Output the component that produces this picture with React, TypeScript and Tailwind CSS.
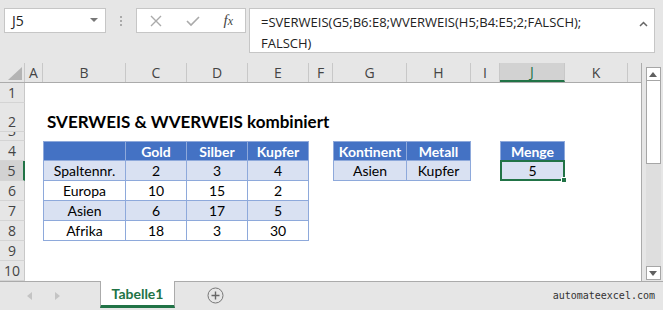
import React from "react";
import clsx from "clsx";

type Col = { key: string; w: string };
type Row = { n: number; h: string };
type CellDef = { text: string; kind: "head" | "light" | "white" | "title" };

const cols: Col[] = [
  { key: "A", w: "w-[18px]" },
  { key: "B", w: "w-[83px]" },
  { key: "C", w: "w-[61px]" },
  { key: "D", w: "w-[61px]" },
  { key: "E", w: "w-[61px]" },
  { key: "F", w: "w-[24px]" },
  { key: "G", w: "w-[74px]" },
  { key: "H", w: "w-[64px]" },
  { key: "I", w: "w-[29px]" },
  { key: "J", w: "w-[65px]" },
  { key: "K", w: "w-[63px]" },
];

const rows: Row[] = [
  { n: 1, h: "h-[20px]" },
  { n: 2, h: "h-[29px]" },
  { n: 3, h: "h-[9px]" },
  { n: 4, h: "h-[20px]" },
  { n: 5, h: "h-[20px]" },
  { n: 6, h: "h-[20px]" },
  { n: 7, h: "h-[20px]" },
  { n: 8, h: "h-[20px]" },
  { n: 9, h: "h-[20px]" },
  { n: 10, h: "h-[20px]" },
];

const cells: Record<string, CellDef> = {
  B2: { text: "SVERWEIS & WVERWEIS kombiniert", kind: "title" },
  B4: { text: "", kind: "head" },
  C4: { text: "Gold", kind: "head" },
  D4: { text: "Silber", kind: "head" },
  E4: { text: "Kupfer", kind: "head" },
  G4: { text: "Kontinent", kind: "head" },
  H4: { text: "Metall", kind: "head" },
  J4: { text: "Menge", kind: "head" },
  B5: { text: "Spaltennr.", kind: "light" },
  C5: { text: "2", kind: "light" },
  D5: { text: "3", kind: "light" },
  E5: { text: "4", kind: "light" },
  G5: { text: "Asien", kind: "light" },
  H5: { text: "Kupfer", kind: "light" },
  J5: { text: "5", kind: "light" },
  B6: { text: "Europa", kind: "white" },
  C6: { text: "10", kind: "white" },
  D6: { text: "15", kind: "white" },
  E6: { text: "2", kind: "white" },
  B7: { text: "Asien", kind: "light" },
  C7: { text: "6", kind: "light" },
  D7: { text: "17", kind: "light" },
  E7: { text: "5", kind: "light" },
  B8: { text: "Afrika", kind: "white" },
  C8: { text: "18", kind: "white" },
  D8: { text: "3", kind: "white" },
  E8: { text: "30", kind: "white" },
};

const leftEdge = ["B", "G", "J"];

function Cell({ col, row }: { col: Col; row: Row }) {
  const id = col.key + row.n;
  const c = cells[id];
  if (!c) return <div className={clsx(col.w, "shrink-0")} />;
  if (c.kind === "title") {
    return (
      <div className={clsx(col.w, "shrink-0 flex items-end pl-[4px] pb-[2px] overflow-visible")}>
        <span className="whitespace-nowrap text-[17px] font-bold text-black leading-none">{c.text}</span>
      </div>
    );
  }
  return (
    <div
      className={clsx(
        col.w,
        "shrink-0 relative flex items-center justify-center text-[14px] border-r border-b border-[#8ea9db]",
        leftEdge.includes(col.key) && "border-l",
        row.n === 4 && "border-t",
        c.kind === "head" && "bg-[#4472c4] text-white font-bold",
        c.kind === "light" && "bg-[#d9e1f2] text-black",
        c.kind === "white" && "bg-white text-black"
      )}
    >
      {c.text}
      {id === "J5" && (
        <>
          <div className="absolute -inset-[1px] border-2 border-[#217346]" />
          <div className="absolute -right-[3px] -bottom-[3px] w-[6px] h-[6px] bg-[#217346] border border-white" />
        </>
      )}
    </div>
  );
}

function FormulaBar() {
  return (
    <div className="h-[63px] flex items-start pt-[8px] pl-[4px] pr-[8px] bg-[#e6e6e6]">
      <div className="w-[102px] h-[25px] bg-white border border-[#c6c6c6] flex items-center justify-between pl-[7px] pr-[7px] text-[14px] text-[#222] font-['Open_Sans',sans-serif]">
        <span>J5</span>
        <svg width="8" height="5" viewBox="0 0 8 5">
          <polygon points="0,0 8,0 4,4" fill="#777" />
        </svg>
      </div>
      <div className="w-[30px] h-[25px] flex flex-col items-center justify-center gap-[2px]">
        <div className="w-[2px] h-[2px] bg-[#aaa]" />
        <div className="w-[2px] h-[2px] bg-[#aaa]" />
        <div className="w-[2px] h-[2px] bg-[#aaa]" />
      </div>
      <div className="w-[110px] h-[25px] bg-white border border-[#c6c6c6] flex items-center justify-between pl-[13px] pr-[12px]">
        <svg width="12" height="12" viewBox="0 0 12 12">
          <path d="M1 1 L11 11 M11 1 L1 11" stroke="#aaa" strokeWidth="1.4" />
        </svg>
        <svg width="14" height="12" viewBox="0 0 14 12">
          <path d="M1 6 L5 10 L13 2" stroke="#aaa" strokeWidth="1.6" fill="none" />
        </svg>
        <span className="text-[15px] italic text-[#444] font-['Liberation_Serif',serif] leading-none">
          f<span className="text-[12px]">x</span>
        </span>
      </div>
      <div className="ml-[3px] flex-1 h-[45px] bg-white border border-[#c6c6c6] flex justify-between pl-[11px] pr-[6px] pt-[3px] text-[13px] leading-[21px] text-[#222] font-['Open_Sans',sans-serif]">
        <div>
          <div>=SVERWEIS(G5;B6:E8;WVERWEIS(H5;B4:E5;2;FALSCH);</div>
          <div>FALSCH)</div>
        </div>
        <svg width="9" height="6" viewBox="0 0 9 6" className="mt-[9px]">
          <path d="M1 5 L4.5 1.5 L8 5" stroke="#666" strokeWidth="1.5" fill="none" />
        </svg>
      </div>
    </div>
  );
}

function ColumnHeaders() {
  return (
    <div className="h-[20px] flex bg-[#e6e6e6] border-b border-[#ababab] text-[14px] text-[#444] font-['Open_Sans',sans-serif]">
      <div className="w-[25px] shrink-0 flex items-end justify-end pr-[2px] pb-[2px] border-r border-[#c8c8c8]">
        <svg width="14" height="13" viewBox="0 0 14 13">
          <polygon points="14,0 14,13 0,13" fill="#b4b4b4" />
        </svg>
      </div>
      {cols.map((c) => (
        <div
          key={c.key}
          className={clsx(
            c.w,
            "shrink-0 flex items-center justify-center border-r border-[#c8c8c8]",
            c.key === "J" && "bg-[#d2d2d2] border-b-2 border-b-[#217346] text-[#217346]"
          )}
        >
          {c.key}
        </div>
      ))}
      <div className="flex-1" />
    </div>
  );
}

function Scrollbar() {
  return (
    <div className="w-[22px] shrink-0 bg-[#e6e6e6] border-l border-[#ababab] flex flex-col items-center pt-[4px] pb-[1px] pl-[1px]">
      <div className="w-[15px] h-[14px] bg-white border border-[#a6a6a6] flex items-center justify-center">
        <svg width="8" height="5" viewBox="0 0 8 5">
          <polygon points="0,5 8,5 4,0" fill="#606060" />
        </svg>
      </div>
      <div className="w-[15px] h-[83px] bg-white border border-t-0 border-[#a6a6a6]" />
      <div className="flex-1 w-[15px] bg-[#dedede]" />
      <div className="w-[15px] h-[14px] bg-white border border-[#a6a6a6] flex items-center justify-center">
        <svg width="8" height="5" viewBox="0 0 8 5">
          <polygon points="0,0 8,0 4,5" fill="#606060" />
        </svg>
      </div>
    </div>
  );
}

function Sheet() {
  return (
    <div className="flex">
      <div className="flex-1 flex flex-col">
        <ColumnHeaders />
        {rows.map((r) => (
          <div key={r.n} className={clsx(r.h, "flex")}>
            <div
              className={clsx(
                "w-[25px] shrink-0 flex items-end justify-center overflow-hidden border-b border-[#d4d4d4] text-[14px] text-[#444] leading-[19px] font-['Open_Sans',sans-serif]",
                r.n === 5 ? "bg-[#d2d2d2] border-r-2 border-r-[#217346]" : "bg-[#e6e6e6] border-r border-r-[#c8c8c8]"
              )}
            >
              {r.n}
            </div>
            <div className="flex-1 flex bg-white font-['Lato',sans-serif]">
              {cols.map((c) => (
                <Cell key={c.key} col={c} row={r} />
              ))}
            </div>
          </div>
        ))}
      </div>
      <Scrollbar />
    </div>
  );
}

function TabBar() {
  return (
    <div className="h-[29px] flex items-start bg-[#e6e6e6] border-t border-[#ababab]">
      <div className="w-[100px] h-[27px] flex items-center pl-[27px] gap-[23px]">
        <svg width="5" height="8" viewBox="0 0 5 8">
          <polygon points="5,0 5,8 0,4" fill="#c4c4c4" />
        </svg>
        <svg width="5" height="8" viewBox="0 0 5 8">
          <polygon points="0,0 0,8 5,4" fill="#c4c4c4" />
        </svg>
      </div>
      <div className="w-[75px] h-[27px] -mt-[1px] bg-white border-x border-[#ababab] border-b-[3px] border-b-[#217346] flex items-center justify-center text-[14px] font-bold text-[#217346] font-['Lato',sans-serif]">
        Tabelle1
      </div>
      <div className="w-[80px] h-[27px] flex items-center justify-center">
        <svg width="17" height="17" viewBox="0 0 17 17">
          <circle cx="8.5" cy="8.5" r="7.5" stroke="#777" strokeWidth="1" fill="none" />
          <path d="M8.5 4.5 V12.5 M4.5 8.5 H12.5" stroke="#666" strokeWidth="1.4" />
        </svg>
      </div>
      <div className="flex-1 h-[27px] flex items-center justify-end pr-[8px] text-[10px] text-[#333] font-['DejaVu_Sans_Mono',monospace]">
        automateexcel.com
      </div>
    </div>
  );
}

export default function App() {
  return (
    <div className="w-[663px] h-[310px] overflow-hidden bg-[#e6e6e6] font-['Lato',sans-serif]">
      <FormulaBar />
      <Sheet />
      <TabBar />
    </div>
  );
}
